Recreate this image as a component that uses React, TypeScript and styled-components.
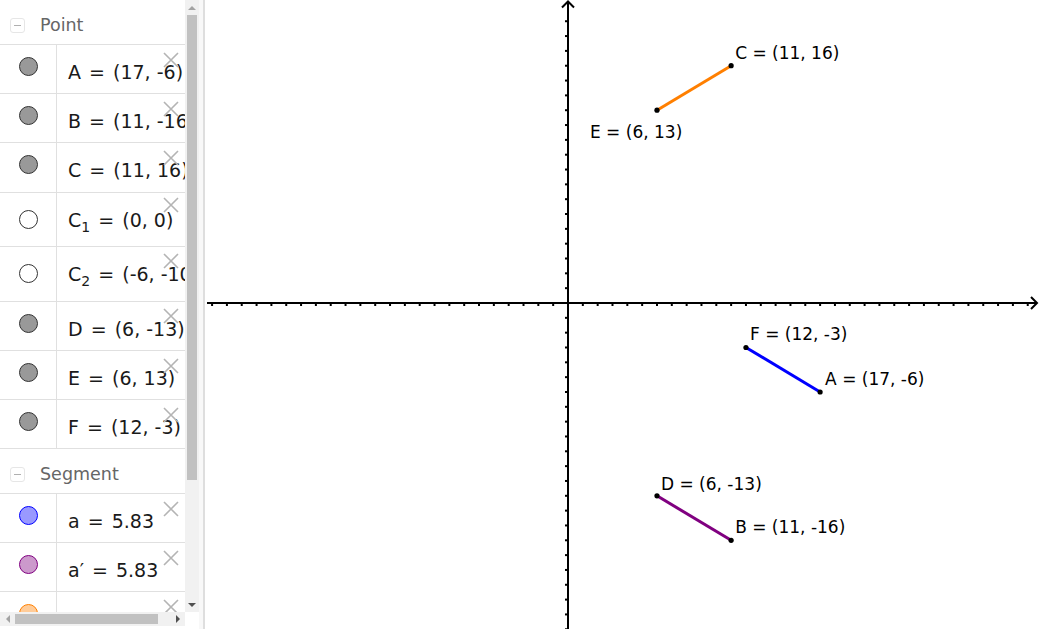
import React from "react"
import styled, { createGlobalStyle } from "styled-components"

const GlobalStyle = createGlobalStyle`
  html, body {
    margin: 0;
    padding: 0;
    background: #fff;
    overflow: hidden;
  }
  body {
    font-family: "DejaVu Sans", sans-serif;
  }
`

const SCALE = 14.83
const ORIGIN_X = 363
const ORIGIN_Y = 303

const Page = styled.div`
  display: flex;
  width: 1041px;
  height: 629px;
  overflow: hidden;
`

const Sidebar = styled.aside`
  flex: 0 0 205px;
  display: flex;
  box-sizing: border-box;
  border-right: 2px solid #dedede;
`

const ScrollFrame = styled.div`
  display: grid;
  grid-template-columns: 185px 14px;
  grid-template-rows: 612px 14px;
  width: 199px;
  align-content: start;
`

const Gutter = styled.div`
  flex: 1;
  background: #f8f8f8;
`

const Viewport = styled.div`
  overflow: hidden;
`

const VTrack = styled.div`
  background: #f1f1f1;
  display: flex;
  flex-direction: column;
  align-items: center;
`

const HTrack = styled.div`
  background: #f1f1f1;
  display: flex;
  align-items: center;
`

const Corner = styled.div`
  background: #fff;
`

const ArrowBox = styled.div`
  flex: 0 0 15px;
  width: 14px;
  height: 14px;
  display: flex;
  align-items: center;
  justify-content: center;
`

const Triangle = styled.span<{ $dir: "up" | "down" | "left" | "right"; $dark?: boolean }>`
  width: 0;
  height: 0;
  border: 4px solid transparent;
  ${p => {
    const c = p.$dark ? "#505050" : "#a3a3a3"
    if (p.$dir === "up") return `border-bottom-color: ${c}; border-top-width: 0;`
    if (p.$dir === "down") return `border-top-color: ${c}; border-bottom-width: 0;`
    if (p.$dir === "left") return `border-right-color: ${c}; border-left-width: 0;`
    return `border-left-color: ${c}; border-right-width: 0;`
  }}
`

const VThumb = styled.div`
  width: 10px;
  height: 465px;
  background: #c1c1c1;
`

const VSpacer = styled.div`
  flex: 1;
`

const HThumb = styled.div`
  width: 143px;
  height: 10px;
  background: #c1c1c1;
`

const HSpacer = styled.div`
  flex: 1;
`

const Header = styled.div`
  display: flex;
  align-items: flex-start;
  gap: 15px;
  height: 45px;
  box-sizing: border-box;
  padding: 17px 0 0 10px;
  border-bottom: 1px solid #e0e0e0;
`

const Toggle = styled.span`
  width: 15px;
  height: 15px;
  margin-top: 1px;
  box-sizing: border-box;
  border: 1px solid #e6e6e6;
  border-radius: 3px;
  display: flex;
  align-items: center;
  justify-content: center;
  &::before {
    content: "";
    width: 7px;
    height: 1px;
    background: #b0b0b0;
  }
`

const HeaderLabel = styled.span`
  font-size: 17.5px;
  line-height: 17px;
  color: #666;
`

const Row = styled.div<{ $h: number }>`
  display: flex;
  height: ${p => p.$h}px;
  box-sizing: border-box;
  border-bottom: 1px solid #e0e0e0;
`

const MarkerCell = styled.div<{ $top: number }>`
  flex: 0 0 56px;
  border-right: 1px solid #e0e0e0;
  display: flex;
  justify-content: center;
  padding-top: ${p => p.$top}px;
`

const Marker = styled.span<{ $fill: string; $stroke: string }>`
  width: 19px;
  height: 19px;
  box-sizing: border-box;
  border-radius: 50%;
  border: 1px solid ${p => p.$stroke};
  background: ${p => p.$fill};
`

const TextCell = styled.div`
  flex: 1;
  position: relative;
  padding: 16px 0 0 11px;
  font-size: 19px;
  line-height: 22px;
  color: #1a1a1a;
  white-space: nowrap;
`

const Eq = styled.span`
  margin: 0 2px;
`

const Sub = styled.span`
  font-size: 14px;
  vertical-align: -5px;
  line-height: 0;
`

const Remove = styled.svg<{ $top: number }>`
  position: absolute;
  left: 106px;
  top: ${p => p.$top}px;
  width: 16px;
  height: 16px;
`

const Graphics = styled.main`
  flex: 1;
  position: relative;
  background: #fff;
`

const Canvas = styled.svg`
  display: block;
  width: 100%;
  height: 100%;
`

type Item = {
  name: React.ReactNode
  value: string
  fill: string
  stroke: string
  h: number
  markerTop: number
  xTop: number
}

const POINT_FILL = "#999999"
const POINT_STROKE = "#333333"

const points: Item[] = [
  { name: "A", value: "(17, -6)", fill: POINT_FILL, stroke: POINT_STROKE, h: 49, markerTop: 12, xTop: 7 },
  { name: "B", value: "(11, -16)", fill: POINT_FILL, stroke: POINT_STROKE, h: 49, markerTop: 12, xTop: 7 },
  { name: "C", value: "(11, 16)", fill: POINT_FILL, stroke: POINT_STROKE, h: 50, markerTop: 12, xTop: 7 },
  { name: <>C<Sub>1</Sub></>, value: "(0, 0)", fill: "#fff", stroke: POINT_STROKE, h: 54, markerTop: 17, xTop: 4 },
  { name: <>C<Sub>2</Sub></>, value: "(-6, -10)", fill: "#fff", stroke: POINT_STROKE, h: 55, markerTop: 17, xTop: 6 },
  { name: "D", value: "(6, -13)", fill: POINT_FILL, stroke: POINT_STROKE, h: 49, markerTop: 12, xTop: 6 },
  { name: "E", value: "(6, 13)", fill: POINT_FILL, stroke: POINT_STROKE, h: 49, markerTop: 12, xTop: 7 },
  { name: "F", value: "(12, -3)", fill: POINT_FILL, stroke: POINT_STROKE, h: 49, markerTop: 12, xTop: 7 },
]

const segments: Item[] = [
  { name: "a", value: "5.83", fill: "#9999ff", stroke: "#0000ff", h: 49, markerTop: 12, xTop: 7 },
  { name: "a′", value: "5.83", fill: "#cc99cc", stroke: "#800080", h: 49, markerTop: 12, xTop: 7 },
  { name: "a″", value: "5.83", fill: "#ffcc99", stroke: "#ff8000", h: 49, markerTop: 12, xTop: 7 },
]

function RemoveIcon({ top }: { top: number }) {
  return (
    <Remove $top={top} viewBox="0 0 16 16">
      <path d="M1 1 L15 15 M15 1 L1 15" stroke="#b4b4b4" strokeWidth="1.6" fill="none" />
    </Remove>
  )
}

function ItemRow({ item }: { item: Item }) {
  return (
    <Row $h={item.h}>
      <MarkerCell $top={item.markerTop}>
        <Marker $fill={item.fill} $stroke={item.stroke} />
      </MarkerCell>
      <TextCell>
        {item.name} <Eq>=</Eq> {item.value}
        <RemoveIcon top={item.xTop} />
      </TextCell>
    </Row>
  )
}

function Group({ title, items }: { title: string; items: Item[] }) {
  return (
    <>
      <Header>
        <Toggle />
        <HeaderLabel>{title}</HeaderLabel>
      </Header>
      {items.map((item, i) => (
        <ItemRow key={i} item={item} />
      ))}
    </>
  )
}

function AlgebraView() {
  return (
    <Sidebar>
      <ScrollFrame>
        <Viewport>
          <Group title="Point" items={points} />
          <Group title="Segment" items={segments} />
        </Viewport>
        <VTrack>
          <ArrowBox>
            <Triangle $dir="up" />
          </ArrowBox>
          <VThumb />
          <VSpacer />
          <ArrowBox>
            <Triangle $dir="down" $dark />
          </ArrowBox>
        </VTrack>
        <HTrack>
          <ArrowBox>
            <Triangle $dir="left" />
          </ArrowBox>
          <HThumb />
          <HSpacer />
          <ArrowBox>
            <Triangle $dir="right" $dark />
          </ArrowBox>
        </HTrack>
        <Corner />
      </ScrollFrame>
      <Gutter />
    </Sidebar>
  )
}

const px = (x: number) => ORIGIN_X + x * SCALE
const py = (y: number) => ORIGIN_Y - y * SCALE

type Seg = { from: [number, number]; to: [number, number]; color: string }

const segs: Seg[] = [
  { from: [6, 13], to: [11, 16], color: "#ff7f00" },
  { from: [12, -3], to: [17, -6], color: "#0000ff" },
  { from: [6, -13], to: [11, -16], color: "#800080" },
]

type Pt = { name: string; x: number; y: number; dx: number; dy: number }

const pts: Pt[] = [
  { name: "C", x: 11, y: 16, dx: 4, dy: -7 },
  { name: "E", x: 6, y: 13, dx: -67, dy: 28 },
  { name: "F", x: 12, y: -3, dx: 4, dy: -7 },
  { name: "A", x: 17, y: -6, dx: 5, dy: -7 },
  { name: "D", x: 6, y: -13, dx: 4, dy: -6 },
  { name: "B", x: 11, y: -16, dx: 4, dy: -7 },
]

function GraphicsView() {
  const xTicks: number[] = []
  for (let k = -24; k <= 31; k++) if (k !== 0) xTicks.push(px(k))
  const yTicks: number[] = []
  for (let k = -22; k <= 20; k++) if (k !== 0) yTicks.push(py(k))

  return (
    <Graphics>
      <Canvas>
        <line x1={2} y1={ORIGIN_Y} x2={832} y2={ORIGIN_Y} stroke="#000" strokeWidth={2} />
        <line x1={ORIGIN_X} y1={1.5} x2={ORIGIN_X} y2={640} stroke="#000" strokeWidth={2} />
        {xTicks.map((x, i) => (
          <line key={"x" + i} x1={x} y1={ORIGIN_Y} x2={x} y2={ORIGIN_Y + 3} stroke="#000" strokeWidth={2} />
        ))}
        {yTicks
          .filter(y => y > 10)
          .map((y, i) => (
            <line key={"y" + i} x1={ORIGIN_X} y1={y} x2={ORIGIN_X - 3} y2={y} stroke="#000" strokeWidth={2} />
          ))}
        <polyline
          points={`${ORIGIN_X - 6},7.5 ${ORIGIN_X},1.5 ${ORIGIN_X + 6},7.5`}
          fill="none"
          stroke="#000"
          strokeWidth={2}
        />
        <polyline points="826,297 832,303 826,309" fill="none" stroke="#000" strokeWidth={2} />
        {segs.map((s, i) => (
          <line
            key={"s" + i}
            x1={px(s.from[0])}
            y1={py(s.from[1])}
            x2={px(s.to[0])}
            y2={py(s.to[1])}
            stroke={s.color}
            strokeWidth={3}
          />
        ))}
        {pts.map(p => (
          <g key={p.name}>
            <circle cx={px(p.x)} cy={py(p.y)} r={2.6} fill="#000" />
            <text
              x={px(p.x) + p.dx}
              y={py(p.y) + p.dy}
              fontFamily="DejaVu Sans, sans-serif"
              fontSize={17}
              fill="#000"
            >
              {`${p.name} = (${p.x}, ${p.y})`}
            </text>
          </g>
        ))}
      </Canvas>
    </Graphics>
  )
}

export default function App() {
  return (
    <>
      <GlobalStyle />
      <Page>
        <AlgebraView />
        <GraphicsView />
      </Page>
    </>
  )
}
